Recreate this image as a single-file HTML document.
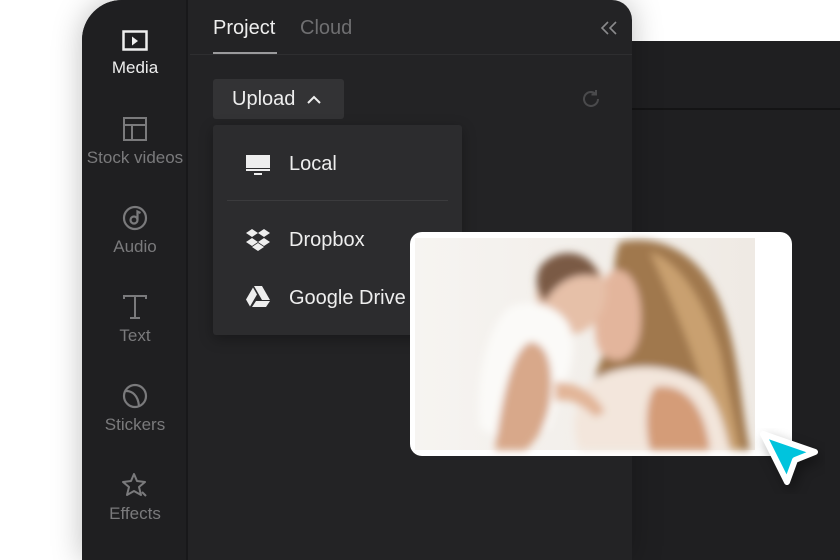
<!DOCTYPE html>
<html><head><meta charset="utf-8"><style>
*{margin:0;padding:0;box-sizing:border-box}
body{width:840px;height:560px;background:#fff;position:relative;overflow:hidden;font-family:"Liberation Sans",sans-serif}
.back{position:absolute;left:600px;top:41px;width:240px;height:519px;background:#1f1f21}
.back .ln{position:absolute;left:0;right:0;top:67px;height:2px;background:#141415}
.panel{position:absolute;left:82px;top:0;width:550px;height:560px;background:#232325;border-radius:40px 20px 0 0;overflow:hidden;box-shadow:0 0 30px rgba(0,0,0,.25)}
.side{position:absolute;left:0;top:0;width:106px;height:560px;background:#1f1f21;border-right:2px solid #18181a}
.it{position:absolute;left:0;width:106px;text-align:center;color:#7a7a7c;font-size:17px}
.it svg{display:block;margin:0 auto 6px}
.tab{position:absolute;top:17px;font-size:20px}
.ul{position:absolute;left:131px;top:52px;width:64px;height:2px;background:#9a9a9c}
.hl{position:absolute;left:108px;right:0;top:54px;height:1px;background:#2e2e30}
.up{position:absolute;left:131px;top:79px;width:131px;height:40px;background:#333335;border-radius:3px;color:#eee;font-size:20px;padding:9px 0 0 19px}
.dd{position:absolute;left:131px;top:125px;width:249px;height:210px;background:#2c2c2e;border-radius:3px;box-shadow:0 4px 14px rgba(0,0,0,.3)}
.dd .t{position:absolute;left:76px;color:#eee;font-size:20px}
.sep{position:absolute;left:14px;right:14px;top:75px;height:1px;background:#3b3b3d}
.card{position:absolute;left:410px;top:232px;width:382px;height:224px;background:#fff;border-radius:12px;overflow:hidden}
</style></head><body>
<div class="back"><div class="ln"></div></div>
<div class="panel">
 <div class="side">
  <div class="it" style="top:30px;color:#eee"><svg width="26" height="22" viewBox="0 0 26 22"><rect x="1.5" y="1.5" width="23" height="18" fill="none" stroke="#eee" stroke-width="2.5"/><path d="M10 6.5v9l6-4.5z" fill="#eee"/></svg>Media</div>
  <div class="it" style="top:116px"><svg width="26" height="26" viewBox="0 0 26 26" fill="none" stroke="#7a7a7c" stroke-width="2"><rect x="2" y="2" width="22" height="22"/><path d="M2 9h22M10 9v15"/></svg>Stock videos</div>
  <div class="it" style="top:205px"><svg width="26" height="26" viewBox="0 0 26 26" fill="none" stroke="#7a7a7c" stroke-width="2.2"><circle cx="13" cy="13" r="11"/><circle cx="12" cy="15" r="3.5"/><path d="M15.5 15V6.5l3 1.5"/></svg>Audio</div>
  <div class="it" style="top:294px"><svg width="26" height="26" viewBox="0 0 26 26" fill="none" stroke="#7a7a7c" stroke-width="2"><path d="M2 5V2h22v3M13 2v22M8 24h10"/></svg>Text</div>
  <div class="it" style="top:383px"><svg width="26" height="26" viewBox="0 0 26 26" fill="none" stroke="#7a7a7c" stroke-width="2.2"><circle cx="13" cy="13" r="11"/><path d="M4 8c6 0 12 4 13 15"/></svg>Stickers</div>
  <div class="it" style="top:472px"><svg width="28" height="26" viewBox="0 0 28 26" fill="none" stroke="#7a7a7c" stroke-width="2" stroke-linejoin="round"><path d="M13 2l3 7 8 1-6 5 2 8-7-4-7 4 2-8-6-5 8-1z"/><path d="M21 20l4 4"/></svg>Effects</div>
 </div>
 <div class="tab" style="left:131px;color:#eee">Project</div>
 <div class="tab" style="left:218px;color:#6f6f71">Cloud</div>
 <div class="ul"></div><div class="hl"></div>
 <svg style="position:absolute;left:518px;top:20px" width="18" height="16" viewBox="0 0 18 16" fill="none" stroke="#8a8a8c" stroke-width="1.6"><path d="M8 2L2 8l6 6M16 2l-6 6 6 6"/></svg>
 <svg style="position:absolute;left:499px;top:89px" width="20" height="20" viewBox="0 0 20 20" fill="none" stroke="#4a4a4c" stroke-width="2"><path d="M17 10a7 7 0 1 1-2.5-5.4"/><path d="M15 1v4.5h-4.5" /></svg>
 <div class="up">Upload <svg width="16" height="10" viewBox="0 0 16 10" style="margin-left:5px" fill="none" stroke="#eee" stroke-width="2"><path d="M2 8l6-6 6 6"/></svg></div>
 <div class="dd">
  <svg style="position:absolute;left:33px;top:30px" width="24" height="20" viewBox="0 0 24 20"><rect x="0" y="0" width="24" height="13" fill="#eee"/><rect x="0" y="14" width="24" height="2" fill="#eee"/><rect x="8" y="18" width="8" height="2" fill="#eee"/></svg>
  <div class="t" style="top:28px">Local</div>
  <div class="sep"></div>
  <svg style="position:absolute;left:32px;top:104px" width="26" height="22" viewBox="0 0 26 22" fill="#eee"><path d="M7 0l6 4-6 4-6-4zM19 0l6 4-6 4-6-4zM7 9l6 4-6 4-6-4zM19 9l6 4-6 4-6-4zM13 14l6 4-6 4-6-4z"/></svg>
  <div class="t" style="top:104px">Dropbox</div>
  <svg style="position:absolute;left:33px;top:161px" width="24" height="21" viewBox="0 0 24 21" fill="#eee"><path d="M8 0h8l8 14h-8zM7 1.5l4 7-7 12-4-7zM10 15h14l-4 6H6z"/></svg>
  <div class="t" style="top:162px">Google Drive</div>
 </div>
</div>
<div class="card">
<svg width="382" height="224" viewBox="0 0 382 224">
<defs><filter id="b"><feGaussianBlur stdDeviation="4"/></filter><linearGradient id="bg" x1="0" x2="1"><stop offset="0" stop-color="#f6f4f1"/><stop offset="1" stop-color="#efeae4"/></linearGradient></defs>
<rect x="5" y="6" width="340" height="212" fill="url(#bg)"/>
<g filter="url(#b)">
<path d="M210 10c40-8 80 10 100 60s20 100 30 148H190c-20-40-5-80 10-110 5-30 0-80 10-98z" fill="#a0784e"/>
<path d="M240 20c30 10 55 50 70 100l20 98h-20c-10-50-30-110-70-198z" fill="#c9a070"/>
<path d="M200 40c20-10 35 20 30 60-5 30-25 35-40 20-10-20-5-60 10-80z" fill="#e3b59c"/>
<path d="M130 40c20-25 55-20 65 10 5 30-15 55-40 52-25-3-35-35-25-62z" fill="#e6c0a8"/>
<path d="M130 35c15-20 50-20 60 10-20-5-40 0-55 25-10-10-10-25-5-35z" fill="#7a5a44"/>
<path d="M100 75c25-10 50 0 60 20 10 40-10 60-20 100-30 15-60 10-70 0-5-40 5-100 30-120z" fill="#fbfaf8"/>
<path d="M180 150c30-20 80-20 110 0 20 20 25 50 30 68H170c-10-20-5-50 10-68z" fill="#f3e6dc"/>
<path d="M245 155c30-5 50 20 55 63h-60c-5-20-5-50 5-63z" fill="#d49c78"/>
<path d="M120 110c15 0 25 20 20 60-5 30-20 45-25 48h-30c5-40 15-100 35-108z" fill="#d8a88a"/>
<path d="M145 150c20 0 40 10 50 30l-10 5c-15-15-30-20-40-15z" fill="#e2b598"/>
</g>
</svg>
</div>
<svg style="position:absolute;left:755px;top:428px" width="70" height="66" viewBox="0 0 70 66"><path d="M8 6l52 18-20 8-8 22z" fill="#00c4dd" stroke="#fff" stroke-width="6" stroke-linejoin="round" style="filter:drop-shadow(4px 6px 6px rgba(0,0,0,.35))"/></svg>
</body></html>
